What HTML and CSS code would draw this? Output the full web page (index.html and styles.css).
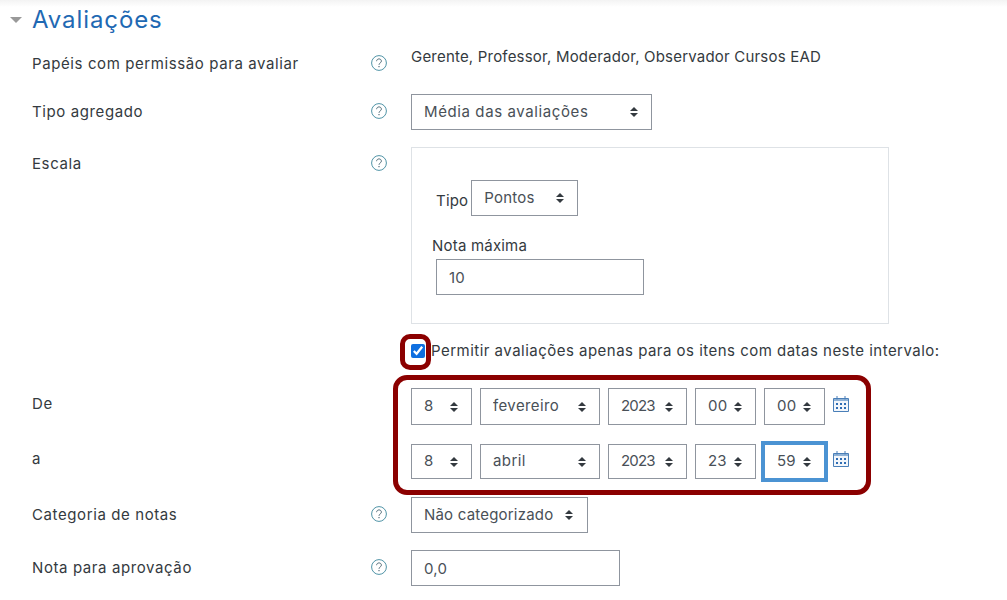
FILE: index.html
```html
<!DOCTYPE html>
<html lang="pt-BR">
<head>
  <meta charset="UTF-8" />
  <title>Avaliações</title>
  <link rel="stylesheet" href="styles.css">
</head>
<body>
  <svg class="icon-defs" width="0" height="0">
    <symbol id="help" viewBox="0 0 16 16">
      <circle cx="8" cy="8" r="7.4" fill="none" stroke="#4f93a6" stroke-width="1"/>
      <path d="M5.6 6.200C5.600 4.800 6.700 3.900 8 3.900s2.400.9 2.400 2.200c0 1.900-2.400 1.800-2.400 3.700" fill="none" stroke="#55707c" stroke-width="1"/>
      <rect x="7.400" y="11" width="1.200" height="1.200" fill="#55707c"/>
    </symbol>
    <symbol id="calendar" viewBox="0 0 16 16">
      <path d="M.5 2.500h15v13H.5z" fill="#f2f6fb" stroke="#4a7fb8"/>
      <path d="M1 3h14v2H1z" fill="#8fb2d6"/>
      <path d="M4 0v3.500M12 0v3.500" stroke="#4a7fb8"/>
      <path d="M3 7h2v2H3zM7 7h2v2H7zM11 7h2v2h-2zM3 11h2v2H3zM7 11h2v2H7zM11 11h2v2h-2z" fill="#2f6db3"/>
    </symbol>
  </svg>

  <div class="section-head">
    <span class="caret"></span>
    <h2>Avaliações</h2>
  </div>

  <div class="row row-roles">
    <label>Papéis com permissão para avaliar</label>
    <svg class="help"><use href="#help"/></svg>
    <div class="static">Gerente, Professor, Moderador, Observador Cursos EAD</div>
  </div>

  <div class="row row-aggregate">
    <label>Tipo agregado</label>
    <svg class="help"><use href="#help"/></svg>
    <select class="w-aggregate"><option>Média das avaliações</option></select>
  </div>

  <div class="row row-scale">
    <label>Escala</label>
    <svg class="help"><use href="#help"/></svg>
    <div class="scale-box">
      <div class="scale-type">
        <span>Tipo</span>
        <select class="w-points"><option>Pontos</option></select>
      </div>
      <div class="scale-max">Nota máxima</div>
      <input class="w-max" type="text" value="10" />
    </div>
  </div>

  <div class="row row-check">
    <span></span>
    <span></span>
    <div class="check-line">
      <span class="check-mark"><input type="checkbox" checked /></span>
      <span>Permitir avaliações apenas para os itens com datas neste intervalo:</span>
    </div>
  </div>

  <div class="date-group">
    <div class="row row-date">
      <label>De</label>
      <span></span>
      <div class="date-fields">
        <select class="w-day"><option>8</option></select>
        <select class="w-month"><option>fevereiro</option></select>
        <select class="w-year"><option>2023</option></select>
        <select class="w-day"><option>00</option></select>
        <select class="w-day"><option>00</option></select>
        <svg class="cal"><use href="#calendar"/></svg>
      </div>
    </div>
    <div class="row row-date row-date-end">
      <label>a</label>
      <span></span>
      <div class="date-fields">
        <select class="w-day"><option>8</option></select>
        <select class="w-month"><option>abril</option></select>
        <select class="w-year"><option>2023</option></select>
        <select class="w-day"><option>23</option></select>
        <select class="w-day focused"><option>59</option></select>
        <svg class="cal"><use href="#calendar"/></svg>
      </div>
    </div>
  </div>

  <div class="row row-category">
    <label>Categoria de notas</label>
    <svg class="help"><use href="#help"/></svg>
    <select class="w-category"><option>Não categorizado</option></select>
  </div>

  <div class="row row-pass">
    <label>Nota para aprovação</label>
    <svg class="help"><use href="#help"/></svg>
    <input class="w-pass" type="text" value="0,0" />
  </div>
</body>
</html>
```

FILE: styles.css
```css
* {
  box-sizing: border-box;
}

body {
  margin: 0;
  padding-left: 32px;
  height: 600px;
  overflow: hidden;
  font-family: "Inter", "Liberation Sans", sans-serif;
  font-size: 15px;
  letter-spacing: 0.2px;
  line-height: 22px;
  color: #343a40;
  background: linear-gradient(#f3f3f3, #ffffff 7px);
}

.icon-defs {
  position: absolute;
}

.section-head {
  display: flex;
  align-items: center;
  height: 45px;
  padding-bottom: 5px;
  position: relative;
}

.section-head h2 {
  margin: 0;
  font-size: 24px;
  font-weight: 400;
  letter-spacing: 0.9px;
  color: #1f69b3;
}

.caret {
  position: absolute;
  left: -22px;
  top: 17px;
  border-left: 6px solid transparent;
  border-right: 6px solid transparent;
  border-top: 6px solid #999;
}

.row {
  display: grid;
  grid-template-columns: 339px 40px 1fr;
  align-items: start;
}

.row label {
  display: block;
  letter-spacing: 0.6px;
}

.help {
  width: 16px;
  height: 16px;
}

.row-roles {
  height: 49px;
}

.row-roles label {
  padding-top: 8px;
}

.row-roles .help {
  margin-top: 10px;
}

.static {
  padding-top: 1px;
}

.row-aggregate {
  margin-bottom: 17px;
}

.row-aggregate label {
  padding-top: 7px;
}

.row-aggregate .help {
  margin-top: 9px;
}

.row-scale label {
  padding-top: 6px;
}

.row-scale .help {
  margin-top: 8px;
}

select,
input[type="text"] {
  height: 36px;
  padding: 0 12px;
  border: 1px solid #8f959e;
  border-radius: 0;
  background-color: #fff;
  color: #495057;
  font: inherit;
  letter-spacing: inherit;
}

select {
  appearance: none;
  background-image: url("data:image/svg+xml,%3Csvg xmlns='http://www.w3.org/2000/svg' width='8' height='10'%3E%3Cpath d='M0 4l4-4 4 4zM0 6l4 4 4-4z' fill='%23343a40'/%3E%3C/svg%3E");
  background-repeat: no-repeat;
  background-position: right 13px center;
}

.scale-box {
  width: 478px;
  height: 177px;
  padding: 32px 20px 0;
  border: 1px solid #dee2e6;
}

.scale-type {
  display: flex;
  align-items: center;
  gap: 3px;
  margin-left: 4px;
}

.scale-type span {
  padding-top: 5px;
}

.scale-max {
  margin-top: 19px;
  margin-bottom: -1px;
}

.w-max {
  display: block;
  width: 208px;
  margin: 3px 0 0 4px;
}

.w-aggregate {
  width: 241px;
  letter-spacing: 0.6px;
}

.w-points {
  width: 107px;
}

.w-category {
  width: 177px;
  background-position: right 14px center;
}

.w-pass {
  width: 209px;
  height: 37px;
}

.w-day {
  width: 61px;
}

.w-month {
  width: 120px;
  letter-spacing: 0.4px;
}

.w-year {
  width: 79px;
  letter-spacing: -0.8px;
}

.row-check {
  margin-top: 16px;
}

.check-line {
  display: flex;
  align-items: center;
  gap: 6px;
  white-space: nowrap;
  letter-spacing: 0.48px;
}

.check-mark {
  display: block;
  position: relative;
  width: 14px;
  height: 14px;
}

.check-mark input {
  display: block;
  width: 14px;
  height: 14px;
  margin: 0;
  accent-color: #0f6fe0;
}

.check-mark::after {
  content: "";
  position: absolute;
  left: -11px;
  right: -6px;
  top: -10px;
  bottom: -12px;
  border: 5px solid #8b0000;
  border-radius: 10px;
}

.date-group {
  position: relative;
  margin-top: 26px;
}

.date-group::after {
  content: "";
  position: absolute;
  left: 361px;
  right: 136px;
  top: -13px;
  bottom: -16px;
  border: 5px solid #8b0000;
  border-radius: 14px;
  pointer-events: none;
}

.row-date label {
  padding-top: 5px;
}

.date-fields {
  display: flex;
  align-items: flex-start;
  gap: 8px;
}

.date-fields select {
  height: 37px;
  padding-bottom: 2px;
}

.row-date-end {
  margin-top: 19px;
}

.row-date-end label {
  padding-top: 4px;
}

.row-date-end .date-fields select {
  height: 35px;
}

.focused {
  border-color: #4b93d3;
  box-shadow: 0 0 0 3px #4b93d3;
}

.cal {
  width: 16px;
  height: 16px;
  margin-top: 8px;
}

.row-date-end .cal {
  margin-top: 7px;
}

.row-category {
  margin-top: 18px;
  margin-bottom: 17px;
}

.row-category label {
  padding-top: 7px;
}

.row-category .help {
  margin-top: 9px;
}

.row-pass label {
  padding-top: 7px;
}

.row-pass .help {
  margin-top: 9px;
}
```
